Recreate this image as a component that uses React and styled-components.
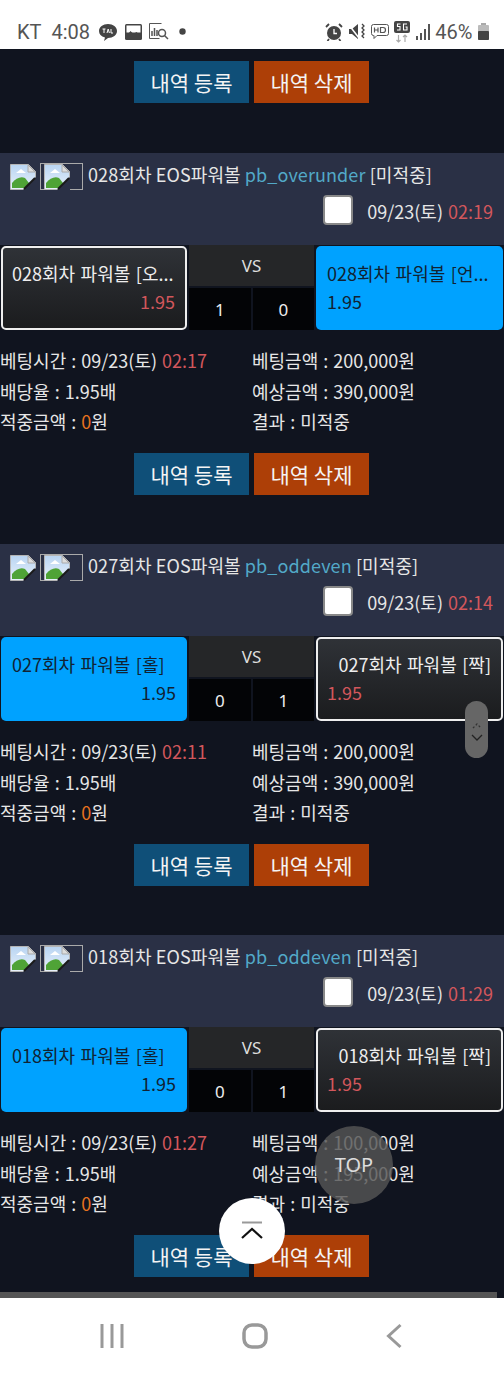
import styled, { createGlobalStyle } from "styled-components"

const Global = createGlobalStyle`
html,body{margin:0;padding:0;background:#10141f;}
*{box-sizing:border-box;}
`
const Phone = styled.div`
position:relative;
width:504px;
height:1373px;
overflow:hidden;
display:flex;
flex-direction:column;
font-family:"Noto Sans CJK KR","Noto Sans",sans-serif;
background:#10141f;
`
const StatusBar = styled.div`
height:49px;
flex:none;
background:#fff;
display:flex;
align-items:center;
justify-content:space-between;
padding:14px 15px 0 17px;
color:#555;
font-family:Roboto,sans-serif;
font-size:20px;
`
const StatusGroup = styled.div`
display:flex;
align-items:center;
gap:${p => p.$gap}px;
`
const Carrier = styled.span`
margin-right:3px;
`
const Content = styled.div`
flex:1;
overflow:hidden;
position:relative;
`
const Buttons = styled.div`
display:flex;
justify-content:center;
gap:5px;
height:42px;
padding-right:1px;
margin-top:${p => p.$top}px;
margin-bottom:${p => p.$bottom || 0}px;
`
const Btn = styled.div`
width:115px;
height:42px;
background:${p => p.$bg};
color:#f4f4f4;
font-size:21px;
display:flex;
align-items:center;
justify-content:center;
`
const Card = styled.div`
margin-top:49px;
`
const CardHead = styled.div`
height:92px;
background:#2a3045;
padding:10px 0 0 10px;
color:#e6e6e6;
font-size:18px;
`
const TitleRow = styled.div`
display:flex;
align-items:center;
height:27px;
white-space:nowrap;
`
const TitleText = styled.span`
margin:-5px 0 0 5px;
letter-spacing:.1px;
`
const Type = styled.span`
color:#52a9c8;
`
const BrokenBox = styled.div`
width:43px;
height:27px;
border:1px solid #aaa;
margin-left:4px;
padding-left:3px;
display:flex;
align-items:center;
`
const DateRow = styled.div`
display:flex;
align-items:center;
justify-content:flex-end;
margin-top:6px;
padding-right:11px;
height:30px;
word-spacing:1px;
`
const Check = styled.div`
width:30px;
height:30px;
margin-top:-2px;
background:#fff;
border:2px solid #888;
border-radius:4px;
margin-right:14px;
`
const Red = styled.span`
color:#d2575c;
`
const Orange = styled.span`
color:#e8721e;
`
const Match = styled.div`
display:flex;
height:85px;
padding-left:1px;
gap:2px;
background:#10141f;
`
const Pick = styled.div`
width:${p => p.$w}px;
flex:none;
height:84px;
margin-top:1px;
border-radius:5px;
padding:${p => p.$on ? "14px 11px 0" : "12px 10px 0 9px"};
font-size:18px;
background:${p => p.$on ? "#00a2ff" : "linear-gradient(#2f3237,#1b1c1e)"};
border:${p => p.$on ? "none" : "2px solid #eee"};
color:${p => p.$on ? "#123" : "#eee"};
`
const PickName = styled.div`
white-space:nowrap;
text-align:${p => p.$align};
line-height:26px;
word-spacing:1.5px;
`
const Odds = styled.div`
text-align:${p => p.$align};
line-height:28px;
margin-top:1px;
color:${p => p.$on ? "#123" : "#d2575c"};
`
const Center = styled.div`
width:125px;
flex:none;
display:flex;
flex-direction:column;
gap:2px;
font-family:"Noto Sans",sans-serif;
color:#ddd;
`
const Vs = styled.div`
height:41px;
background:#252628;
display:flex;
align-items:center;
justify-content:center;
font-size:17px;
`
const Scores = styled.div`
flex:1;
display:flex;
gap:2px;
`
const Score = styled.div`
flex:1;
background:#030406;
display:flex;
align-items:center;
justify-content:center;
color:#eee;
font-size:17px;
padding-top:1px;
`
const Info = styled.div`
display:grid;
grid-template-columns:252px 1fr;
margin-top:15px;
color:#e6e6e6;
font-size:18px;
line-height:30.67px;
word-spacing:1px;
white-space:nowrap;
`
const ScrollHandle = styled.div`
position:absolute;
left:465px;
top:701px;
width:23px;
height:57px;
border-radius:12px;
background:#666;
display:flex;
flex-direction:column;
align-items:center;
justify-content:center;
gap:5px;
padding-top:4px;
`
const TopBtn = styled.div`
position:absolute;
left:315px;
top:1126px;
width:78px;
height:78px;
border-radius:50%;
background:rgba(85,85,85,.82);
color:#ddd;
font-size:20px;
font-family:"Noto Sans",sans-serif;
padding-bottom:2px;
display:flex;
align-items:center;
justify-content:center;
`
const UpBtn = styled.div`
position:absolute;
left:219px;
top:1198px;
width:66px;
height:66px;
border-radius:50%;
background:#fff;
display:flex;
align-items:center;
justify-content:center;
`
const ScrollLine = styled.div`
position:absolute;
left:0;
bottom:0;
width:497px;
height:6px;
background:#555;
`
const Nav = styled.div`
height:75px;
flex:none;
background:#fff;
display:flex;
align-items:center;
justify-content:space-between;
padding:0 102px 0 100px;
`

const Broken = () => (
  <svg width="26" height="26" viewBox="0 0 26 26">
    <defs>
      <linearGradient id="sky" x1="0" y1="0" x2="0" y2="1">
        <stop offset="0" stopColor="#b8d4f2" />
        <stop offset="1" stopColor="#e8f1fb" />
      </linearGradient>
    </defs>
    <path d="M.5.5h18l7 7v18H.5z" fill="url(#sky)" stroke="#b5b5b5" />
    <path d="M18 1v7h7z" fill="#ddd" stroke="#aaa" />
    <path d="M6 9l5-4 5 4z" fill="#fff" />
    <path d="M2 24v-5c4-5 9-7 13-5l8 10z" fill="#4fa336" />
    <path d="M13 26L26 13v13z" fill="#2a3045" />
    <path d="M14 25L25 14" stroke="#1a1a1a" strokeWidth="2" />
  </svg>
)

const Talk = () => (
  <svg width="20" height="18" viewBox="0 0 20 18" style={{ marginLeft: 1 }}>
    <path d="M10 1c5 0 9 3 9 7s-4 7-9 7l-4 3 1-3.500C3 13.500 1 11 1 8c0-4 4-7 9-7z" fill="#444" />
    <path d="M4.500 6h3M6 6v4M9 10l1.200-4 1.200 4M13 6v4h2" stroke="#fff" strokeWidth="1" fill="none" />
  </svg>
)
const Gallery = () => (
  <svg width="17" height="16" viewBox="0 0 17 16">
    <rect x="0" y="0" width="17" height="16" rx="1.500" fill="#444" />
    <rect x="1.500" y="1.500" width="14" height="7" fill="#fff" />
    <path d="M1.500 12l4-5 3 3 3-2 4 4v2h-14z" fill="#444" />
  </svg>
)
const Stats = () => (
  <svg width="20" height="17" viewBox="0 0 20 17" fill="none" stroke="#555">
    <path d="M.5.500h12M.5.500v15h10" />
    <path d="M3 13V8M5.500 13V5M8 13V7" strokeWidth="1.500" />
    <circle cx="13" cy="10" r="3.500" strokeWidth="1.500" />
    <path d="M15.500 12.500l3.500 3.500" strokeWidth="1.500" />
  </svg>
)
const Dot = () => (
  <svg width="7" height="7" viewBox="0 0 7 7" style={{ marginLeft: 3 }}>
    <circle cx="3.500" cy="3.500" r="3.200" fill="#444" />
  </svg>
)
const Alarm = () => (
  <svg width="18" height="18" viewBox="0 0 18 18">
    <circle cx="9" cy="10" r="7" fill="#444" />
    <path d="M9 6v4.500h3" stroke="#fff" strokeWidth="1.300" fill="none" />
    <path d="M1 4l3-3M17 4l-3-3M4 16l-1.500 2M14 16l1.500 2" stroke="#444" strokeWidth="1.800" />
  </svg>
)
const Mute = () => (
  <svg width="17" height="17" viewBox="0 0 17 17">
    <path d="M1 6h3l6-5v15l-6-5H1z" fill="#444" />
    <path d="M1 2l10 13" stroke="#fff" strokeWidth="1.500" />
    <path d="M14 1l2 2-2 2 2 2-2 2 2 2-2 2 2 2" stroke="#444" strokeWidth="1.300" fill="none" />
  </svg>
)
const Hd = () => (
  <svg width="18" height="16" viewBox="0 0 18 16" fill="none" stroke="#555">
    <path d="M2.500.500h13a2 2 0 0 1 2 2v7a2 2 0 0 1-2 2H6l-3 3v-3h-.5a2 2 0 0 1-2-2v-7a2 2 0 0 1 2-2z" />
    <path d="M3.500 3.500v5M7 3.500v5M3.500 6H7M9.500 3.500v5h2.500c2 0 2.500-1 2.500-2.500s-.5-2.500-2.500-2.500z" strokeWidth="1.200" />
  </svg>
)
const FiveG = () => (
  <svg width="16" height="22" viewBox="0 0 16 22">
    <rect width="16" height="12" rx="2" fill="#444" />
    <path d="M6.500 3H3.500v2.500h2.500V9H3M13 3h-3.500v6H13V6h-1.500" stroke="#fff" strokeWidth="1.100" fill="none" />
    <path d="M4.500 14v7M2.500 19l2 2 2-2M11 21v-7M9 16l2-2 2 2" stroke="#aaa" strokeWidth="1.200" fill="none" />
  </svg>
)
const Signal = () => (
  <svg width="14" height="16" viewBox="0 0 14 16" fill="#555">
    <rect x="0" y="12" width="2" height="4" />
    <rect x="4" y="9" width="2" height="7" />
    <rect x="8" y="5" width="2" height="11" />
    <rect x="12" y="0" width="2" height="16" />
  </svg>
)
const Battery = () => (
  <svg width="11" height="17" viewBox="0 0 11 17">
    <rect x="3" y="0" width="5" height="2" fill="#aaa" />
    <rect x="0" y="2" width="11" height="15" rx="1" fill="#bbb" />
    <rect x="0" y="8" width="11" height="9" rx="1" fill="#444" />
  </svg>
)

const games = [
  {
    round: "028", type: "pb_overunder", date: "02:19", bet: "02:17", amount: "200,000", expect: "390,000",
    left: "028회차 파워볼 [오...", right: "028회차 파워볼 [언...", leftOn: false, s1: 1, s2: 0, rightAlign: "left",
  },
  {
    round: "027", type: "pb_oddeven", date: "02:14", bet: "02:11", amount: "200,000", expect: "390,000",
    left: "027회차 파워볼 [홀]", right: "027회차 파워볼 [짝]", leftOn: true, s1: 0, s2: 1, rightAlign: "right",
  },
  {
    round: "018", type: "pb_oddeven", date: "01:29", bet: "01:27", amount: "100,000", expect: "195,000",
    left: "018회차 파워볼 [홀]", right: "018회차 파워볼 [짝]", leftOn: true, s1: 0, s2: 1, rightAlign: "right",
  },
]

const ActionButtons = ({ top, bottom }) => (
  <Buttons $top={top} $bottom={bottom}>
    <Btn $bg="#0f4f78">내역 등록</Btn>
    <Btn $bg="#ad3f07">내역 삭제</Btn>
  </Buttons>
)

const Game = ({ g }) => (
  <Card>
    <CardHead>
      <TitleRow>
        <Broken />
        <BrokenBox><Broken /></BrokenBox>
        <TitleText>{g.round}회차 EOS파워볼 <Type>{g.type}</Type> [미적중]</TitleText>
      </TitleRow>
      <DateRow>
        <Check />
        <span>09/23(토) <Red>{g.date}</Red></span>
      </DateRow>
    </CardHead>
    <Match>
      <Pick $w={186} $on={g.leftOn}>
        <PickName $align="left">{g.left}</PickName>
        <Odds $align="right" $on={g.leftOn}>1.95</Odds>
      </Pick>
      <Center>
        <Vs>VS</Vs>
        <Scores>
          <Score>{g.s1}</Score>
          <Score>{g.s2}</Score>
        </Scores>
      </Center>
      <Pick $w={187} $on={!g.leftOn}>
        <PickName $align={g.rightAlign}>{g.right}</PickName>
        <Odds $align="left" $on={!g.leftOn}>1.95</Odds>
      </Pick>
    </Match>
    <Info>
      <span>베팅시간 : 09/23(토) <Red>{g.bet}</Red></span>
      <span>베팅금액 : {g.amount}원</span>
      <span>배당율 : 1.95배</span>
      <span>예상금액 : {g.expect}원</span>
      <span>적중금액 : <Orange>0</Orange>원</span>
      <span>결과 : 미적중</span>
    </Info>
    <ActionButtons top={16} />
  </Card>
)

export default function App() {
  return (
    <Phone>
      <Global />
      <StatusBar>
        <StatusGroup $gap={7}>
          <Carrier>KT</Carrier>
          <span>4:08</span>
          <Talk />
          <Gallery />
          <Stats />
          <Dot />
        </StatusGroup>
        <StatusGroup $gap={5.5}>
          <Alarm />
          <Mute />
          <Hd />
          <FiveG />
          <Signal />
          <span>46%</span>
          <Battery />
        </StatusGroup>
      </StatusBar>
      <Content>
        <ActionButtons top={12} bottom={50} />
        {games.map(g => <Game key={g.round} g={g} />)}
        <ScrollLine />
      </Content>
      <Nav>
        <svg width="24" height="24" viewBox="0 0 24 24" stroke="#999" strokeWidth="3">
          <path d="M2 0v24M12 0v24M22 0v24" />
        </svg>
        <svg width="26" height="26" viewBox="0 0 26 26" fill="none" stroke="#999" strokeWidth="3.500">
          <rect x="2" y="2" width="22" height="22" rx="8" />
        </svg>
        <svg width="16" height="26" viewBox="0 0 16 26" fill="none" stroke="#999" strokeWidth="3">
          <path d="M14.500 2L2.500 13l12 11" />
        </svg>
      </Nav>
      <ScrollHandle>
        <svg width="10" height="6" viewBox="0 0 10 6" fill="none" stroke="#333" strokeWidth="1.300" strokeDasharray="2 2">
          <path d="M1 5l4-4 4 4" />
        </svg>
        <svg width="12" height="7" viewBox="0 0 12 7" fill="none" stroke="#222" strokeWidth="1.300">
          <path d="M1 1l5 5 5-5" />
        </svg>
      </ScrollHandle>
      <TopBtn>TOP</TopBtn>
      <UpBtn>
        <svg width="24" height="20" viewBox="0 0 24 20" fill="none">
          <path d="M2 1.500h20" stroke="#999" strokeWidth="2" />
          <path d="M2 17L12 8l10 9" stroke="#111" strokeWidth="2.200" />
        </svg>
      </UpBtn>
    </Phone>
  )
}
